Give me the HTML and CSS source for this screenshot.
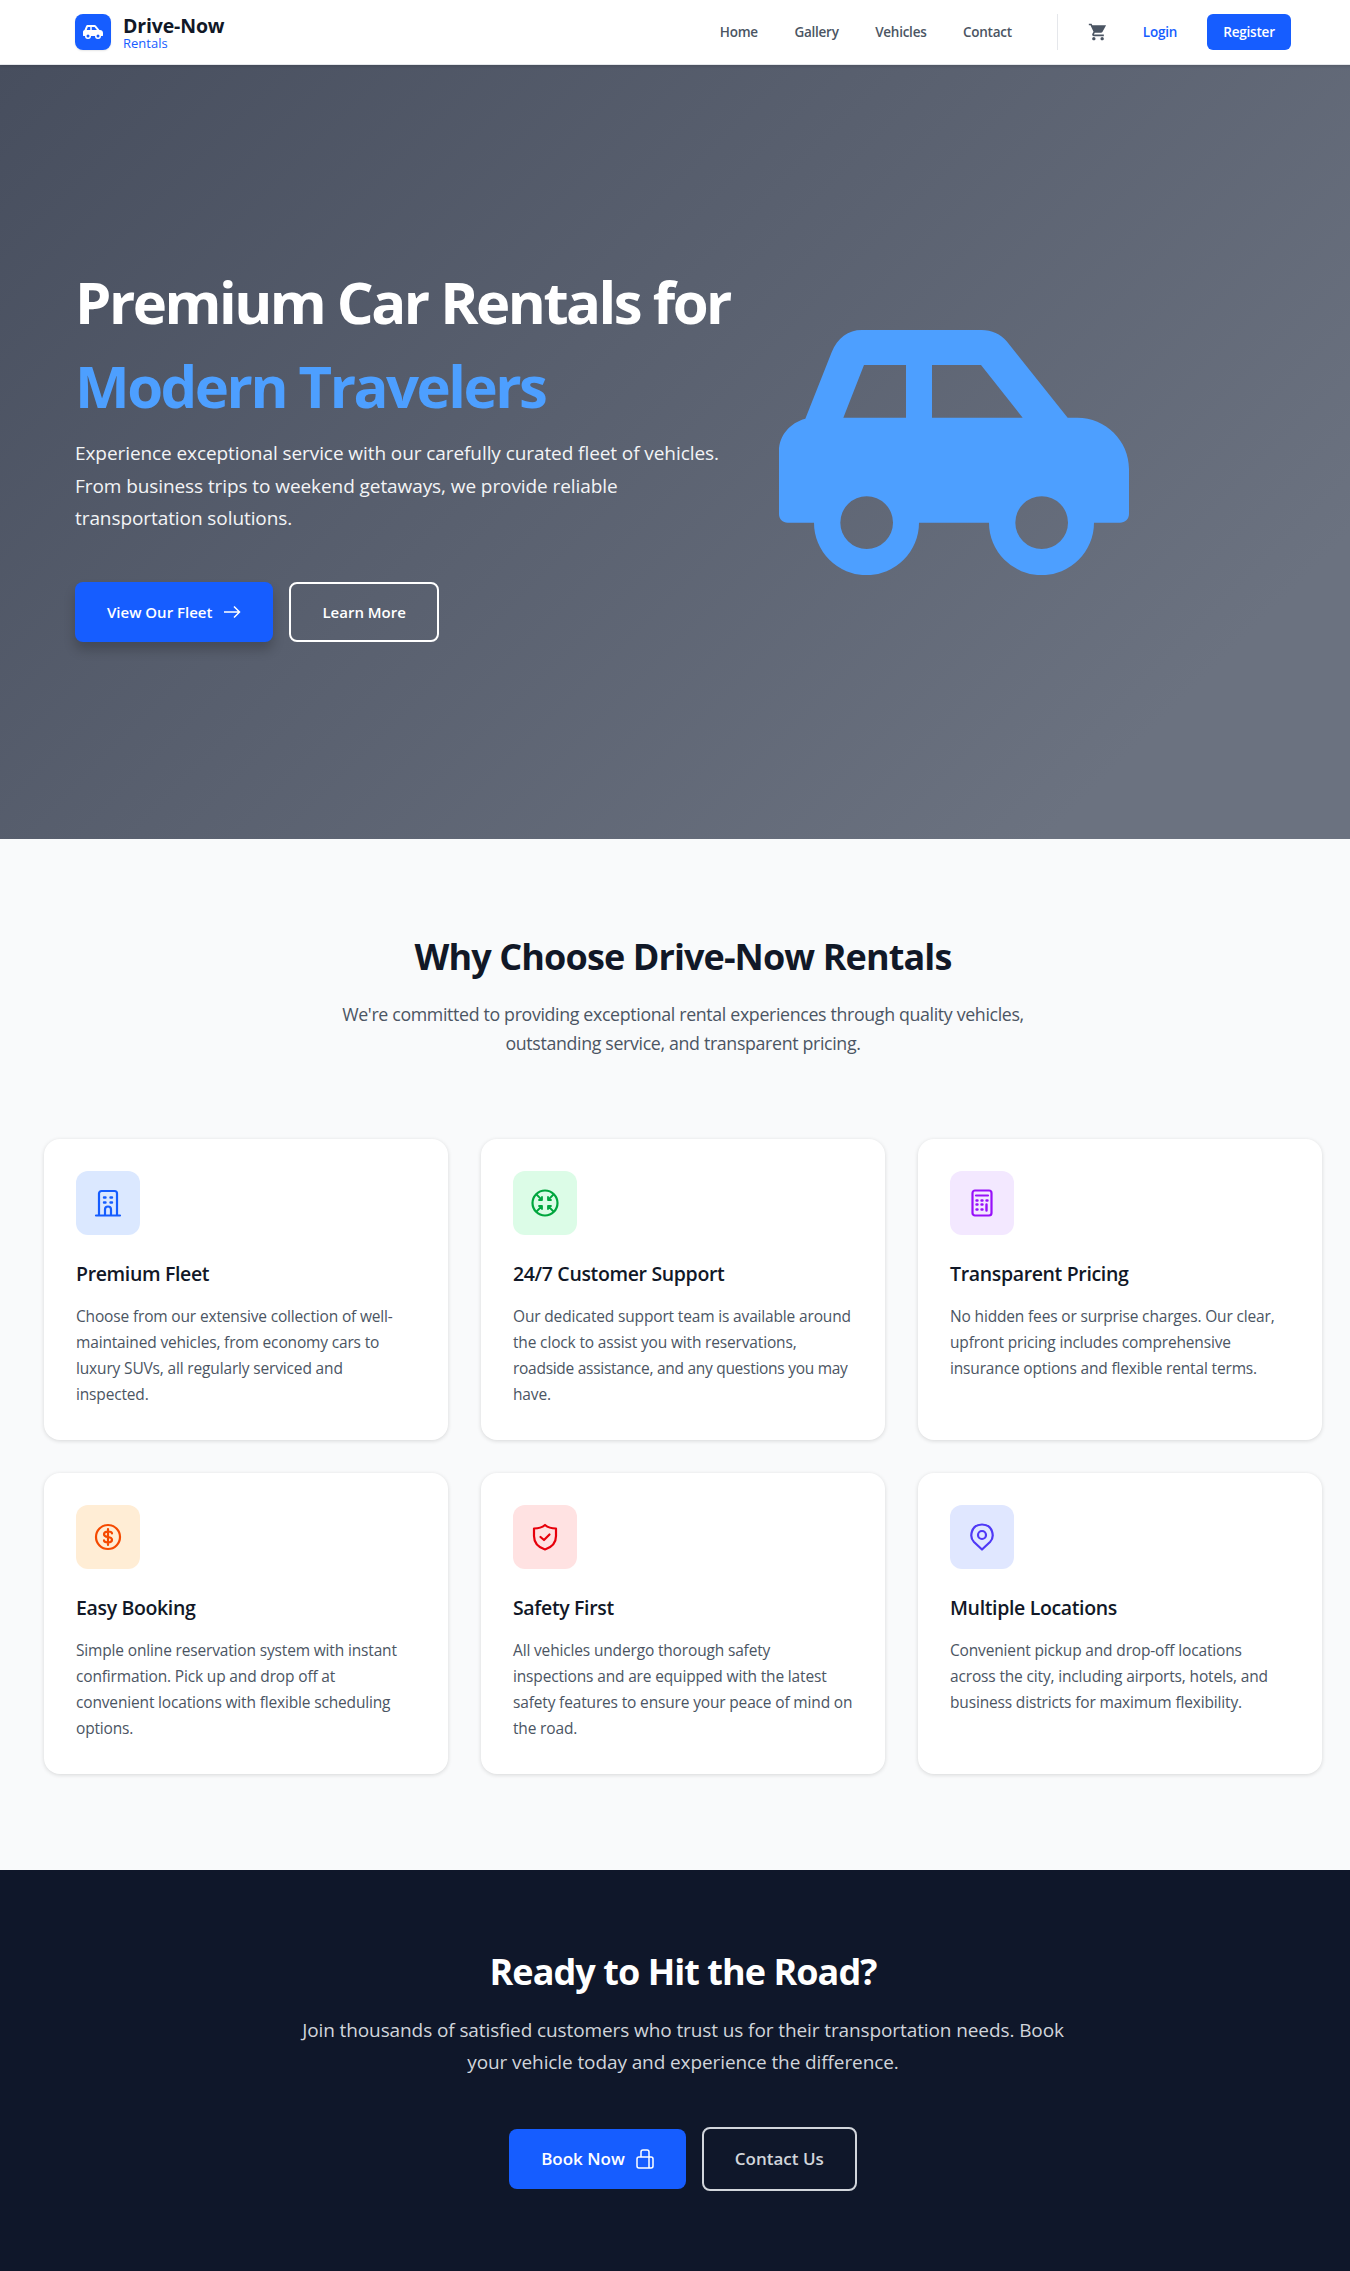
FILE: index.html
```html
<!DOCTYPE html>
<html lang="en">
  <head>
    <meta charset="UTF-8" />
    <meta name="viewport" content="width=device-width, initial-scale=1.0" />
    <title>Drive-Now Rentals</title>
    <link rel="stylesheet" href="styles.css">
  </head>
  <body>
    <svg class="defs" width="0" height="0">
      <symbol id="car" viewBox="117 88 1050 735">
        <path fill-rule="evenodd" d="M196 354L275 155C292 112 325 88 365 88H725C755 88 782 100 800 122L983 351H1012C1097 351 1167 420 1167 505V640C1167 655 1155 666 1140 666H1062A157.500 157.500 0 0 1 747 666H537A157.500 157.500 0 0 1 222 666H143C128 666 117 655 117 640V450C117 405 150 366 196 354ZM372 193H498V351H310ZM576 193H723L848 351H576ZM380 587A79 79 0 1 0 380 745A79 79 0 1 0 380 587ZM905 587A79 79 0 1 0 905 745A79 79 0 1 0 905 587Z" />
      </symbol>
    </svg>

    <div class="page">
      <header class="topbar">
        <a class="brand" href="#">
          <span class="brand-icon"><svg width="20" height="14"><use href="#car" /></svg></span>
          <span class="brand-text">
            <strong>Drive-Now</strong>
            <small>Rentals</small>
          </span>
        </a>
        <nav class="menu">
          <a href="#">Home</a>
          <a href="#">Gallery</a>
          <a href="#">Vehicles</a>
          <a href="#">Contact</a>
        </nav>
        <div class="account">
          <a class="cart" href="#" aria-label="Cart">
            <svg width="20" height="20" viewBox="0 0 24 24" fill="currentColor"><path d="M7 18c-1.100 0-1.990.9-1.990 2S5.900 22 7 22s2-.9 2-2-.9-2-2-2zM1 2v2h2l3.600 7.590-1.350 2.450c-.16.29-.25.62-.25.96 0 1.100.9 2 2 2h12v-2H7.420c-.14 0-.25-.11-.25-.25l.03-.12L8.100 13h7.450c.75 0 1.410-.41 1.750-1.030L21.700 4H5.210l-.94-2H1zm16 16c-1.100 0-1.990.9-1.990 2s.89 2 1.990 2 2-.9 2-2-.9-2-2-2z" /></svg>
          </a>
          <a class="login" href="#">Login</a>
          <a class="register" href="#">Register</a>
        </div>
      </header>

      <section class="hero">
        <div class="hero-text">
          <h1>Premium Car Rentals for <span>Modern Travelers</span></h1>
          <p>Experience exceptional service with our carefully curated fleet of vehicles. From business trips to weekend getaways, we provide reliable transportation solutions.</p>
          <div class="hero-buttons">
            <a class="btn btn-blue btn-shadow" href="#">View Our Fleet
              <svg width="18" height="14" viewBox="0 0 18 14" fill="none" stroke="currentColor" stroke-width="1.500"><path d="M1 7H16.500M11 1.500L16.500 7L11 12.500" /></svg>
            </a>
            <a class="btn btn-outline" href="#">Learn More</a>
          </div>
        </div>
        <svg class="hero-car" width="350" height="245"><use href="#car" /></svg>
      </section>

      <section class="features">
        <h2>Why Choose Drive-Now Rentals</h2>
        <p class="intro">We're committed to providing exceptional rental experiences through quality vehicles, outstanding service, and transparent pricing.</p>
        <div class="card-grid">
          <article class="card">
            <div class="icon icon-blue">
              <svg viewBox="0 0 28 28"><path d="M2 26.500H26M5 26.500V4.500A2.500 2.500 0 0 1 7.500 2H20.500A2.500 2.500 0 0 1 23 4.500V26.500M11 26.500V20.500A3 3 0 0 1 17 20.500V26.500" /><path class="dots" d="M10 8.500H11.500M16.500 8.500H18M10 13.500H11.500M16.500 13.500H18" /></svg>
            </div>
            <h3>Premium Fleet</h3>
            <p>Choose from our extensive collection of well-maintained vehicles, from economy cars to luxury SUVs, all regularly serviced and inspected.</p>
          </article>
          <article class="card">
            <div class="icon icon-green">
              <svg viewBox="0 0 28 28"><circle cx="14" cy="14" r="12.500" /><path class="thin" d="M5.500 5.500L11 11M11 8V11H8M22.500 5.500L17 11M17 8V11H20M5.500 22.500L11 17M11 20V17H8M22.500 22.500L17 17M17 20V17H20" /></svg>
            </div>
            <h3>24/7 Customer Support</h3>
            <p>Our dedicated support team is available around the clock to assist you with reservations, <span class="tight">roadside assistance, and any questions you may</span> have.</p>
          </article>
          <article class="card">
            <div class="icon icon-purple">
              <svg viewBox="0 0 28 28"><rect x="4.500" y="1.500" width="19" height="25" rx="2.500" /><path d="M8 6.500H20" /><path class="dots" d="M8.500 11.500H9.500M13.500 11.500H14.500M18.500 11.500H19.500M8.500 15.500H9.500M13.500 15.500H14.500M18.500 15.500V21.500M8.500 20.500H9.500M13.500 20.500H14.500" /></svg>
            </div>
            <h3>Transparent Pricing</h3>
            <p>No hidden fees or surprise charges. Our clear, upfront pricing includes comprehensive insurance options and flexible rental terms.</p>
          </article>
          <article class="card">
            <div class="icon icon-orange">
              <svg viewBox="0 0 28 28"><circle cx="14" cy="14" r="12" /><path d="M18 10.500C18 9 16.500 8.500 14 8.500S10 9.500 10 11.200S11.500 13.700 14 14S18 15 18 16.800S16.500 19.500 14 19.500S10 18.800 10 17.300M14 6V22" /></svg>
            </div>
            <h3>Easy Booking</h3>
            <p>Simple online reservation system with instant confirmation. Pick up and drop off at convenient locations with flexible scheduling options.</p>
          </article>
          <article class="card">
            <div class="icon icon-red">
              <svg viewBox="0 0 28 28"><path d="M14 2C17 4.500 20.500 5.500 25 5.500V13C25 20 20 24.500 14 26.500C8 24.500 3 20 3 13V5.500C7.500 5.500 11 4.500 14 2Z" /><path d="M9.500 14L13 17L18.500 11.500" /></svg>
            </div>
            <h3>Safety First</h3>
            <p>All vehicles undergo thorough safety inspections and are equipped with the latest safety features to ensure your peace of mind on the road.</p>
          </article>
          <article class="card">
            <div class="icon icon-indigo">
              <svg viewBox="0 0 28 28"><path d="M14 26.500L6 19C1 14 3 1.500 14 1.500S27 14 22 19Z" /><circle cx="14" cy="12" r="4" /></svg>
            </div>
            <h3>Multiple Locations</h3>
            <p>Convenient pickup and drop-off locations across the city, including airports, hotels, and business districts for maximum flexibility.</p>
          </article>
        </div>
      </section>

      <section class="cta">
        <h2>Ready to Hit the Road?</h2>
        <p>Join thousands of satisfied customers who trust us for their transportation needs. Book your vehicle today and experience the difference.</p>
        <div class="cta-buttons">
          <a class="btn btn-blue btn-large" href="#">Book Now
            <svg width="18" height="20" viewBox="0 0 18 20" fill="none" stroke="currentColor" stroke-width="1.500"><path d="M5 8V3A2 2 0 0 1 7 1H11A2 2 0 0 1 13 3V8" /><path d="M3 8H15A2 2 0 0 1 17 10V17A2 2 0 0 1 15 19H3A2 2 0 0 1 1 17V10A2 2 0 0 1 3 8ZM13 8V19" /></svg>
          </a>
          <a class="btn btn-outline btn-large btn-grey" href="#">Contact Us</a>
        </div>
      </section>
    </div>
  </body>
</html>
```

FILE: styles.css
```css
* {
  box-sizing: border-box;
}

body {
  margin: 0;
  overflow-x: hidden;
  font-family: "Open Sans", sans-serif;
  color: #111827;
}

a {
  text-decoration: none;
}

.defs {
  position: absolute;
}

.page {
  width: 1366px;
}

/* top bar */
.topbar {
  display: flex;
  align-items: center;
  height: 65px;
  padding: 0 75px;
  background: white;
  border-bottom: 1px solid #e5e7eb;
  position: relative;
  box-shadow: 0 1px 3px rgba(0, 0, 0, 0.15);
}

.brand {
  display: flex;
  align-items: center;
  gap: 12px;
  color: #111827;
}

.brand-icon {
  display: flex;
  align-items: center;
  justify-content: center;
  width: 36px;
  height: 36px;
  border-radius: 8px;
  background: #165dff;
  color: white;
  box-shadow: 0 1px 2px rgba(0, 0, 0, 0.1);
}

.brand-icon svg {
  fill: currentColor;
}

.brand-text {
  display: flex;
  flex-direction: column;
}

.brand-text strong {
  font-size: 19.500px;
  font-weight: 700;
  line-height: 22px;
  letter-spacing: -0.15px;
}

.brand-text small {
  font-size: 13px;
  line-height: 13px;
  color: #165dff;
}

.menu {
  display: flex;
  gap: 36.500px;
  margin-left: auto;
}

.menu a {
  font-size: 13.500px;
  font-weight: 600;
  color: #4b5563;
  letter-spacing: -0.25px;
}

.account {
  display: flex;
  align-items: center;
  height: 36px;
  margin-left: 45px;
  padding-left: 30.500px;
  border-left: 1px solid #e5e7eb;
}

.cart {
  display: flex;
  color: #4b5563;
}

.login {
  margin-left: 34.500px;
  font-size: 13.500px;
  font-weight: 600;
  color: #165dff;
  letter-spacing: -0.25px;
}

.register {
  display: flex;
  align-items: center;
  justify-content: center;
  width: 84px;
  height: 36px;
  margin-left: 30px;
  border-radius: 6px;
  background: #165dff;
  color: white;
  font-size: 13.500px;
  font-weight: 600;
  letter-spacing: -0.2px;
}

/* hero */
.hero {
  display: flex;
  align-items: center;
  height: 774px;
  padding: 0 0 2px 75px;
  background: linear-gradient(135deg, #474e5e 0%, #6b7280 85%);
  color: white;
}

.hero-car {
  margin-top: 2px;
}

.hero-text {
  flex: 0 0 704px;
}

.hero-text h1 {
  margin: 0;
  max-width: 680px;
  font-size: 58px;
  font-weight: 700;
  line-height: 84px;
  letter-spacing: -2.500px;
}

.hero-text h1 span {
  display: block;
  color: #4d9fff;
}

.hero-text p {
  width: 660px;
  margin: 9px 0 47px;
  font-size: 19px;
  line-height: 32.500px;
  letter-spacing: -0.08px;
  color: #f3f4f6;
}

.hero-buttons {
  display: flex;
  gap: 16px;
}

.hero-car {
  fill: #4d9fff;
}

.btn {
  display: inline-flex;
  align-items: center;
  justify-content: center;
  gap: 11px;
  height: 60px;
  padding: 0 32px;
  border-radius: 8px;
  font-size: 15px;
  font-weight: 600;
  color: white;
}

.btn-blue {
  background: #165dff;
}

.btn-shadow {
  box-shadow: 0 8px 12px rgba(0, 0, 0, 0.2);
}

.btn-outline {
  border: 2px solid white;
  padding: 0 31px;
}

.btn-large {
  font-size: 17px;
}

.btn-large.btn-outline {
  height: 64px;
}

.btn-grey {
  border-color: #d1d5db;
  color: #d1d5db;
}

/* features */
.features {
  padding: 96px 44px;
  background: #f9fafb;
  text-align: center;
}

.features h2 {
  margin: 0;
  font-size: 36px;
  font-weight: 700;
  line-height: 44px;
  letter-spacing: -0.9px;
}

.intro {
  width: 768px;
  margin: 21px auto 80px;
  font-size: 17.800px;
  line-height: 29.250px;
  letter-spacing: -0.35px;
  color: #4b5563;
}

.card-grid {
  display: grid;
  grid-template-columns: repeat(3, 404px);
  gap: 33px;
  text-align: left;
}

.card {
  height: 301px;
  padding: 32px;
  border-radius: 16px;
  background: white;
  box-shadow: 0 1px 4px rgba(0, 0, 0, 0.14);
}

.card h3 {
  margin: 25px 0 15px;
  font-size: 19.500px;
  font-weight: 600;
  line-height: 28px;
  letter-spacing: -0.35px;
}

.card p {
  margin: 0;
  font-size: 15.500px;
  line-height: 26px;
  letter-spacing: -0.16px;
  color: #4b5563;
}

.card .tight {
  white-space: nowrap;
  letter-spacing: -0.28px;
}

.icon {
  display: flex;
  align-items: center;
  justify-content: center;
  width: 64px;
  height: 64px;
  border-radius: 12px;
}

.icon svg {
  width: 28px;
  height: 28px;
  fill: none;
  stroke: currentColor;
  stroke-width: 2.200;
  stroke-linecap: round;
  stroke-linejoin: round;
}

.icon .dots {
  stroke-width: 2.400;
}

.icon .thin {
  stroke-width: 1.800;
}

.icon-blue {
  background: #dbe8ff;
  color: #165dff;
}

.icon-green {
  background: #dcfce7;
  color: #00a63e;
}

.icon-purple {
  background: #f3e8ff;
  color: #9810fa;
}

.icon-orange {
  background: #ffedd5;
  color: #f54900;
}

.icon-red {
  background: #ffe2e2;
  color: #e7000b;
}

.icon-indigo {
  background: #e0e7ff;
  color: #4f39f6;
}

/* call to action */
.cta {
  height: 401px;
  padding-top: 80px;
  background: #0f172a;
  color: white;
  text-align: center;
}

.cta h2 {
  margin: 0;
  font-size: 36px;
  font-weight: 700;
  line-height: 44px;
  letter-spacing: -0.95px;
}

.cta p {
  width: 768px;
  margin: 20px auto 48px;
  font-size: 19px;
  line-height: 32.500px;
  letter-spacing: -0.1px;
  color: #d1d5db;
}

.cta-buttons {
  display: flex;
  align-items: center;
  justify-content: center;
  gap: 16px;
}
```
